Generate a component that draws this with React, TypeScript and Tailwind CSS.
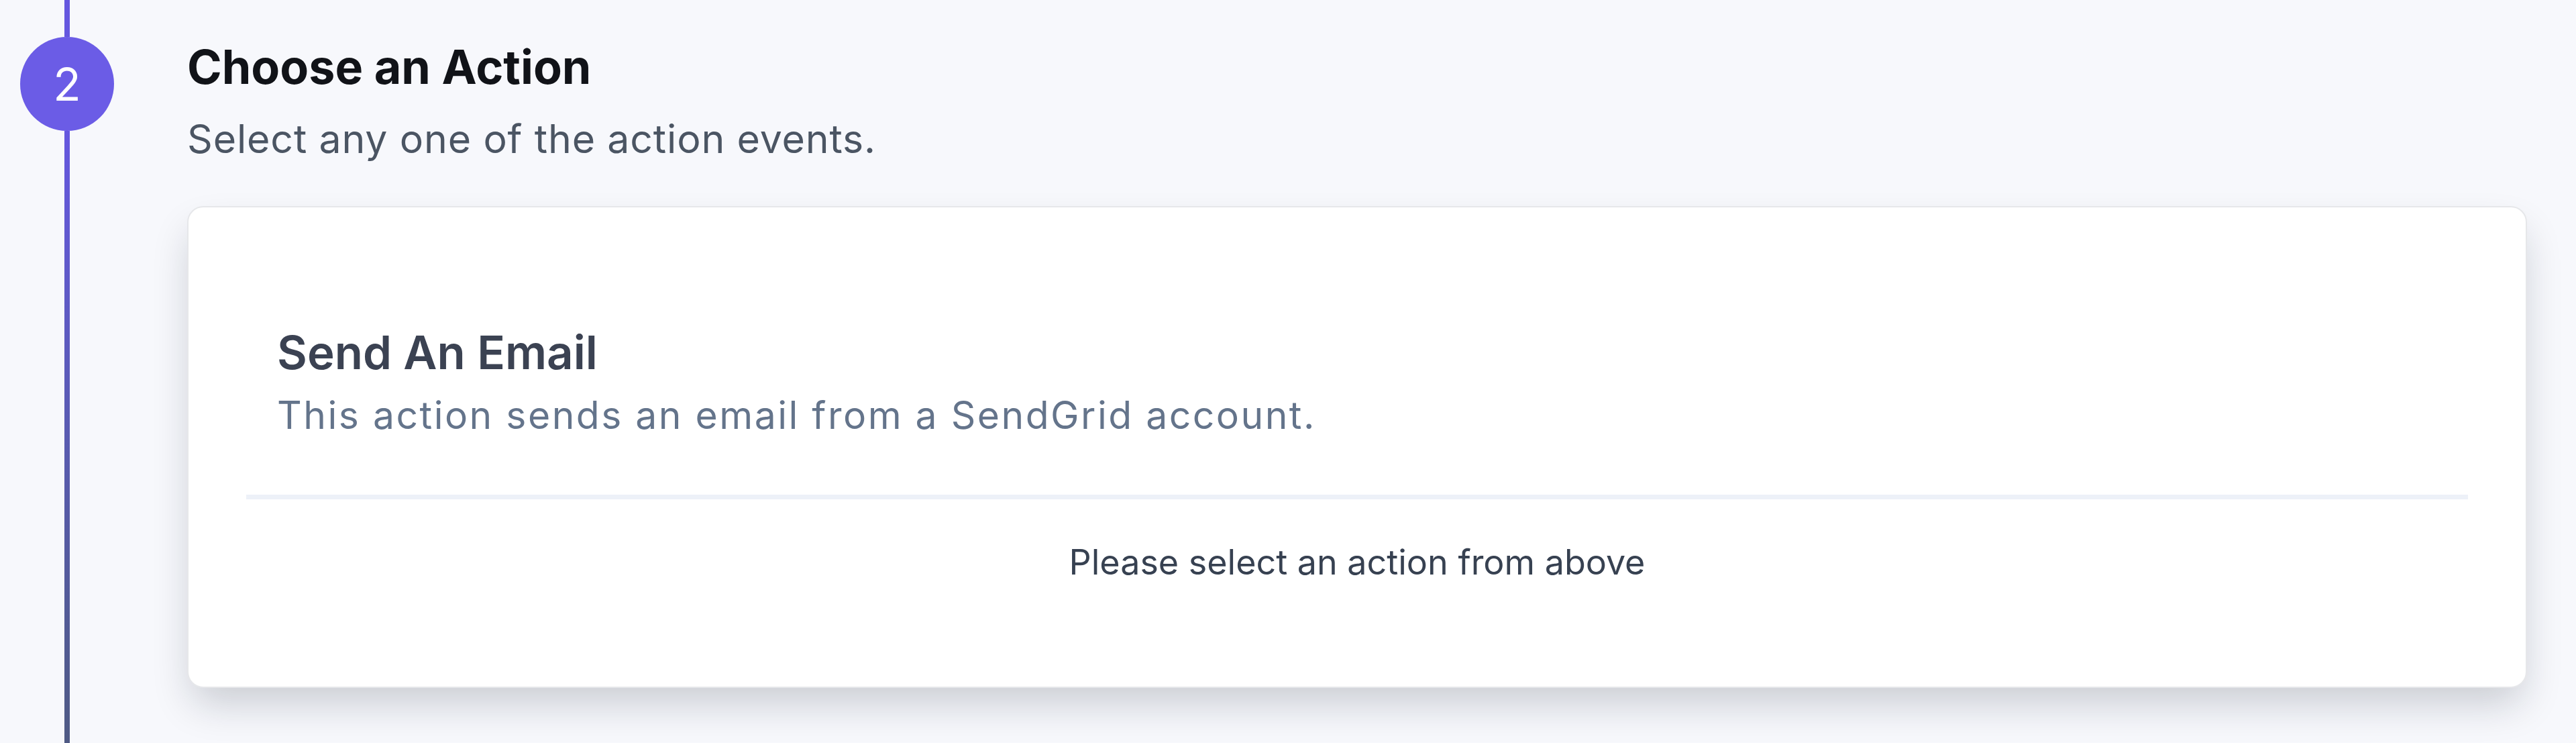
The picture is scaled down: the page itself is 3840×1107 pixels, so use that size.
import React from 'react';

const StepMarker = ({ step }: { step: number }) => {
  return (
    <div className="flex w-[200px] shrink-0 flex-col items-center">
      <div className="h-[55px] w-[8px] bg-[#6557df]" />
      <div className="flex h-[140px] w-[140px] shrink-0 items-center justify-center rounded-full bg-[#6b5ce6] text-[68px] leading-none text-white">
        {step}
      </div>
      <div className="w-[8px] flex-1 bg-gradient-to-b from-[#6557df] to-[#4f5a84]" />
    </div>
  );
};

const ActionOption = ({ title, description }: { title: string; description: string }) => {
  return (
    <div className="px-[46px] pt-[175px]">
      <h3 className="text-[69px] font-semibold leading-[82px] text-[#3b4252]">{title}</h3>
      <p className="mt-[19px] text-[57px] leading-[68px] tracking-[2.5px] text-[#64748b]">{description}</p>
    </div>
  );
};

const App = () => {
  return (
    <div
      className="flex h-[1107px] w-full overflow-hidden bg-[#f7f8fc]"
      style={{ fontFamily: 'Inter, "Noto Sans", sans-serif' }}
    >
      <StepMarker step={2} />

      <div className="flex-1 pl-[79px] pr-[73px]">
        {/* Step header */}
        <h2 className="mt-[58px] text-[70px] font-bold leading-[84px] text-[#111318]">Choose an Action</h2>
        <p className="mt-[30px] text-[59px] leading-[70px] tracking-[0.85px] text-[#4b5563]">
          Select any one of the action events.
        </p>

        {/* Action picker */}
        <div className="mt-[65px] h-[718px] rounded-[24px] border-2 border-[#e6e7ea] bg-white px-[86px] shadow-[0_30px_60px_-8px_rgba(15,23,42,0.2)]">
          <ActionOption
            title="Send An Email"
            description="This action sends an email from a SendGrid account."
          />
          <div className="mt-[84px] h-[7px] bg-[#edf1f8]" />
          <p className="mt-[63px] text-center text-[52px] leading-[62px] text-[#374151]">
            Please select an action from above
          </p>
        </div>
      </div>
    </div>
  );
};

export default App;
